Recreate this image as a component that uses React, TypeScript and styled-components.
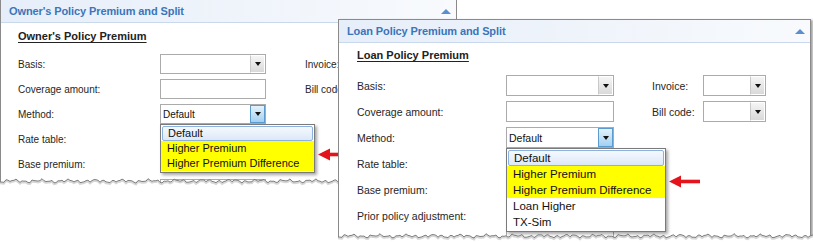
import React from "react";
import styled, { createGlobalStyle } from "styled-components";

const GlobalStyle = createGlobalStyle`
  html, body {
    margin: 0;
    padding: 0;
    background: #fff;
  }
  body {
    font-family: "Liberation Sans", Arial, sans-serif;
    color: #262626;
  }
`;

type Metrics = {
  left: number;
  top: number;
  layer: number;
  width: number;
  height: number;
  topBorder: boolean;
  titleSize: number;
  padLeft: number;
  headingTop: number;
  formTop: number;
  cols: number[];
  rowH: number;
  rowGap: number;
  labelSize: number;
  itemSize: number;
  itemH: number;
  listW: number;
  arrowTop: number;
};

type Row = {
  label: string;
  control?: "select" | "input" | "method";
  side?: string;
};

const Canvas = styled.div`
  position: relative;
  width: 813px;
  height: 242px;
  overflow: hidden;
  background: #fff;
`;

// each panel is a cropped screenshot laid on the canvas, so it sits at its own spot
const Window = styled.section<{ $m: Metrics }>`
  position: absolute;
  z-index: ${(p) => p.$m.layer};
  left: ${(p) => p.$m.left}px;
  top: ${(p) => p.$m.top}px;
  width: ${(p) => p.$m.width}px;
  height: ${(p) => p.$m.height}px;
  box-sizing: border-box;
  display: flex;
  flex-direction: column;
  background: #fff;
  border-left: 1px solid #8a8a8a;
  border-right: 1px solid #8a8a8a;
  border-top: ${(p) => (p.$m.topBorder ? "1px solid #8a8a8a" : "none")};
  box-shadow: ${(p) => (p.$m.topBorder ? "2px 1px 2px rgba(0, 0, 0, 0.35)" : "none")};
`;

const TitleBar = styled.header`
  flex: none;
  height: 23px;
  box-sizing: border-box;
  display: flex;
  align-items: center;
  justify-content: space-between;
  padding: 0 5px 0 8px;
  background: linear-gradient(to right, #e6eef9, #f8fafd);
  border-bottom: 1px solid #c9d8ec;
`;

const TitleText = styled.h2<{ $size: number }>`
  margin: 0;
  font-size: ${(p) => p.$size}px;
  font-weight: bold;
  color: #3b75ba;
  letter-spacing: -0.1px;
`;

const Collapse = styled.span`
  width: 0;
  height: 0;
  border-left: 5px solid transparent;
  border-right: 5px solid transparent;
  border-bottom: 5px solid #5a8fcf;
`;

const Body = styled.div<{ $m: Metrics }>`
  flex: 1;
  min-height: 0;
  overflow: hidden;
  padding-left: ${(p) => p.$m.padLeft}px;
  padding-top: ${(p) => p.$m.headingTop}px;
`;

const Heading = styled.h3`
  margin: 0;
  height: 14px;
  line-height: 14px;
  font-size: 11px;
  font-weight: bold;
  color: #222;
  text-decoration: underline;
  text-underline-offset: 2px;
`;

const Form = styled.div<{ $m: Metrics }>`
  display: flex;
  flex-direction: column;
  gap: ${(p) => p.$m.rowGap}px;
  margin-top: ${(p) => p.$m.formTop}px;
`;

const FieldRow = styled.div<{ $m: Metrics }>`
  display: grid;
  grid-template-columns: ${(p) => p.$m.cols.map((c) => `${c}px`).join(" ")};
  height: ${(p) => p.$m.rowH}px;
  align-items: center;
`;

const FieldLabel = styled.span<{ $size: number }>`
  font-size: ${(p) => p.$size}px;
  white-space: nowrap;
  color: #262626;
`;

const Cell = styled.div`
  position: relative;
  height: 100%;
`;

const Select = styled.div`
  display: flex;
  height: 100%;
  box-sizing: border-box;
  border: 1px solid #ababab;
  background: #fff;
`;

const SelectValue = styled.span<{ $size: number }>`
  flex: 1;
  display: flex;
  align-items: center;
  padding-left: 2px;
  font-size: ${(p) => p.$size}px;
  color: #111;
`;

const DropButton = styled.span<{ $active?: boolean }>`
  flex: none;
  width: 15px;
  display: flex;
  align-items: center;
  justify-content: center;
  box-sizing: border-box;
  border: 1px solid ${(p) => (p.$active ? "#5c9bcf" : "#fff")};
  border-left-color: ${(p) => (p.$active ? "#5c9bcf" : "#c9c9c9")};
  background: ${(p) =>
    p.$active
      ? "linear-gradient(#e4f2fc, #a3d0f1)"
      : "linear-gradient(#f5f5f5, #d9d9d9)"};
  &::after {
    content: "";
    border-left: 3px solid transparent;
    border-right: 3px solid transparent;
    border-top: 4px solid #111;
  }
`;

const TextBox = styled.div`
  height: 100%;
  box-sizing: border-box;
  border: 1px solid #ababab;
  background: #fff;
`;

// the open list hangs over the rows below the method field
const DropLayer = styled.div<{ $m: Metrics }>`
  position: absolute;
  top: 100%;
  left: 0;
  z-index: 2;
  width: ${(p) => p.$m.listW}px;
`;

const OptionList = styled.ul`
  margin: 0;
  padding: 1px 0;
  list-style: none;
  box-sizing: border-box;
  background: #fff;
  border: 1px solid #7a7a7a;
  box-shadow: 2px 2px 3px rgba(0, 0, 0, 0.35);
`;

const Option = styled.li<{ $tone: "current" | "flagged" | "plain"; $m: Metrics }>`
  height: ${(p) => p.$m.itemH}px;
  line-height: ${(p) => p.$m.itemH - (p.$tone === "current" ? 2 : 0)}px;
  box-sizing: border-box;
  padding-left: ${(p) => (p.$tone === "current" ? 5 : 6)}px;
  margin: ${(p) => (p.$tone === "current" ? "0 1px" : "0")};
  font-size: ${(p) => p.$m.itemSize}px;
  color: #111;
  white-space: nowrap;
  background: ${(p) =>
    p.$tone === "flagged"
      ? "#ffff00"
      : p.$tone === "current"
      ? "linear-gradient(#f5f9fe, #dce8f8)"
      : "#fff"};
  border: ${(p) => (p.$tone === "current" ? "1px solid #8cb1de" : "none")};
  border-radius: ${(p) => (p.$tone === "current" ? "2px" : "0")};
`;

const Pointer = styled.svg<{ $top: number }>`
  position: absolute;
  left: calc(100% + 3px);
  top: ${(p) => p.$top}px;
`;

const Edge = styled.svg`
  position: absolute;
  left: -1px;
  top: calc(100% - 5px);
  z-index: 3;
`;

const tornPoints = (w: number) => {
  const pts: string[] = [];
  for (let x = 0; x <= w; x += 2) {
    const y =
      4 +
      1.0 * Math.sin(x * 0.71) +
      0.8 * Math.sin(x * 0.23 + 1.7) +
      0.6 * Math.sin(x * 1.9 + 0.4);
    pts.push(`${x},${y.toFixed(1)}`);
  }
  return pts;
};

function TornEdge({ width }: { width: number }) {
  const w = width + 6;
  const pts = tornPoints(w);
  const shadow = pts.map((p) => {
    const [x, y] = p.split(",").map(Number);
    return `${x},${(y + 1.3).toFixed(1)}`;
  });
  return (
    <Edge width={w} height={14} viewBox={`0 0 ${w} 14`}>
      <polygon points={`${pts.join(" ")} ${w},14 0,14`} fill="#fff" />
      <polyline points={shadow.join(" ")} fill="none" stroke="rgba(0,0,0,0.16)" strokeWidth={2} />
      <polyline points={pts.join(" ")} fill="none" stroke="#7d7d7d" strokeWidth={1} />
    </Edge>
  );
}

function RedArrow({ top }: { top: number }) {
  return (
    <Pointer $top={top} width={31} height={13} viewBox="0 0 31 13">
      <polygon points="0,6.5 12,0.5 12,12.5" fill="#e3141b" />
      <rect x={11} y={4.7} width={20} height={3.6} fill="#e3141b" />
    </Pointer>
  );
}

function MethodPicker({ m, options }: { m: Metrics; options: string[] }) {
  return (
    <Cell>
      <Select>
        <SelectValue $size={m.labelSize}>Default</SelectValue>
        <DropButton $active />
      </Select>
      <DropLayer $m={m}>
        <OptionList>
          {options.map((o, i) => (
            <Option key={o} $m={m} $tone={i === 0 ? "current" : i < 3 ? "flagged" : "plain"}>
              {o}
            </Option>
          ))}
        </OptionList>
        <RedArrow top={m.arrowTop} />
      </DropLayer>
    </Cell>
  );
}

function SmallSelect({ size }: { size: number }) {
  return (
    <Select>
      <SelectValue $size={size} />
      <DropButton />
    </Select>
  );
}

function Panel({
  m,
  title,
  heading,
  rows,
  options,
}: {
  m: Metrics;
  title: string;
  heading: string;
  rows: Row[];
  options: string[];
}) {
  return (
    <Window $m={m}>
      <TitleBar>
        <TitleText $size={m.titleSize}>{title}</TitleText>
        <Collapse />
      </TitleBar>
      <Body $m={m}>
        <Heading>{heading}</Heading>
        <Form $m={m}>
          {rows.map((r, i) => (
            <FieldRow key={i} $m={m}>
              <FieldLabel $size={m.labelSize}>{r.label}</FieldLabel>
              {r.control === "select" ? (
                <SmallSelect size={m.labelSize} />
              ) : r.control === "input" ? (
                <TextBox />
              ) : r.control === "method" ? (
                <MethodPicker m={m} options={options} />
              ) : (
                <span />
              )}
              <span />
              {r.side ? <FieldLabel $size={m.labelSize}>{r.side}</FieldLabel> : <span />}
              {r.side ? <SmallSelect size={m.labelSize} /> : <span />}
            </FieldRow>
          ))}
        </Form>
      </Body>
      <TornEdge width={m.width} />
    </Window>
  );
}

const ownerMetrics: Metrics = {
  left: 0,
  top: 0,
  layer: 1,
  width: 457,
  height: 182,
  topBorder: false,
  titleSize: 11,
  padLeft: 17,
  headingTop: 6,
  formTop: 11,
  cols: [142, 106, 39, 60, 60],
  rowH: 20,
  rowGap: 5,
  labelSize: 10,
  itemSize: 11,
  itemH: 15,
  listW: 155,
  arrowTop: 24,
};

const loanMetrics: Metrics = {
  left: 338,
  top: 19,
  layer: 2,
  width: 473,
  height: 218,
  topBorder: true,
  titleSize: 11,
  padLeft: 18,
  headingTop: 5,
  formTop: 13,
  cols: [149, 108, 38, 51, 63],
  rowH: 21,
  rowGap: 5,
  labelSize: 10.5,
  itemSize: 11.5,
  itemH: 16,
  listW: 160,
  arrowTop: 27,
};

const ownerRows: Row[] = [
  { label: "Basis:", control: "select", side: "Invoice:" },
  { label: "Coverage amount:", control: "input", side: "Bill code:" },
  { label: "Method:", control: "method" },
  { label: "Rate table:" },
  { label: "Base premium:" },
  { label: "", control: "input" },
];

const loanRows: Row[] = [
  { label: "Basis:", control: "select", side: "Invoice:" },
  { label: "Coverage amount:", control: "input", side: "Bill code:" },
  { label: "Method:", control: "method" },
  { label: "Rate table:" },
  { label: "Base premium:" },
  { label: "Prior policy adjustment:" },
  { label: "", control: "input" },
];

export default function App() {
  return (
    <>
      <GlobalStyle />
      <Canvas>
        <Panel
          m={ownerMetrics}
          title="Owner's Policy Premium and Split"
          heading="Owner's Policy Premium"
          rows={ownerRows}
          options={["Default", "Higher Premium", "Higher Premium Difference"]}
        />
        <Panel
          m={loanMetrics}
          title="Loan Policy Premium and Split"
          heading="Loan Policy Premium"
          rows={loanRows}
          options={["Default", "Higher Premium", "Higher Premium Difference", "Loan Higher", "TX-Sim"]}
        />
      </Canvas>
    </>
  );
}
